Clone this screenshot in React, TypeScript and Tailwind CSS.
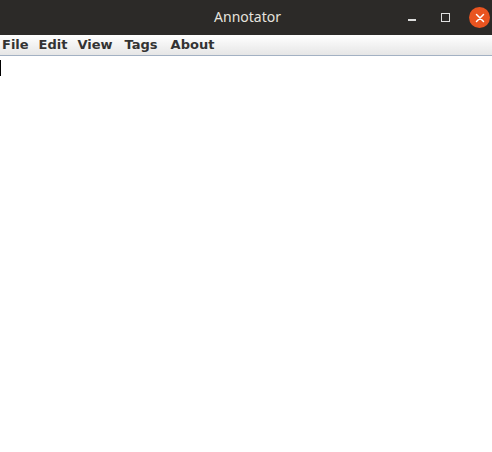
export default function App() {
  return (
    <div className="w-[492px] h-[452px] bg-white flex flex-col overflow-hidden">
      <div className="h-[35px] bg-[#2c2a28] flex items-center relative shrink-0">
        <div className="flex-1 text-center text-[14px] text-[#e6e3de] pl-[3px] pb-[3px]" style={{ fontFamily: '"Noto Sans", sans-serif' }}>Annotator</div>
        <div className="absolute right-0 top-0 h-[35px] flex items-center">
          <div className="w-[8px] h-[1.5px] bg-[#dcdcdc] mt-[5px] mr-[25px]" />
          <div className="w-[9px] h-[9px] border border-[#e0e0e0] mr-[19px]" />
          <div className="w-[21px] h-[21px] rounded-full bg-[#e95420] flex items-center justify-center mr-[2px]">
            <svg width="10" height="10" viewBox="0 0 10 10"><path d="M1.5 1.5 L8.5 8.5 M8.5 1.5 L1.5 8.5" stroke="#fff" strokeWidth="1.5" strokeLinecap="round" /></svg>
          </div>
        </div>
      </div>
      <div className="h-[21px] bg-gradient-to-b from-white to-[#e6e6e6] border-b border-[#a3b1c3] flex items-center shrink-0 text-[13px] font-bold text-[#333333]" style={{ fontFamily: '"DejaVu Sans", sans-serif' }}>
        <span className="pl-[2px] pr-[10px]">File</span>
        <span className="pr-[10px]">Edit</span>
        <span className="pr-[12px]">View</span>
        <span className="pr-[13px]">Tags</span>
        <span>About</span>
      </div>
      <div className="flex-1 pt-[4px]">
        <div className="w-[1px] h-[16px] bg-black" />
      </div>
    </div>
  );
}
